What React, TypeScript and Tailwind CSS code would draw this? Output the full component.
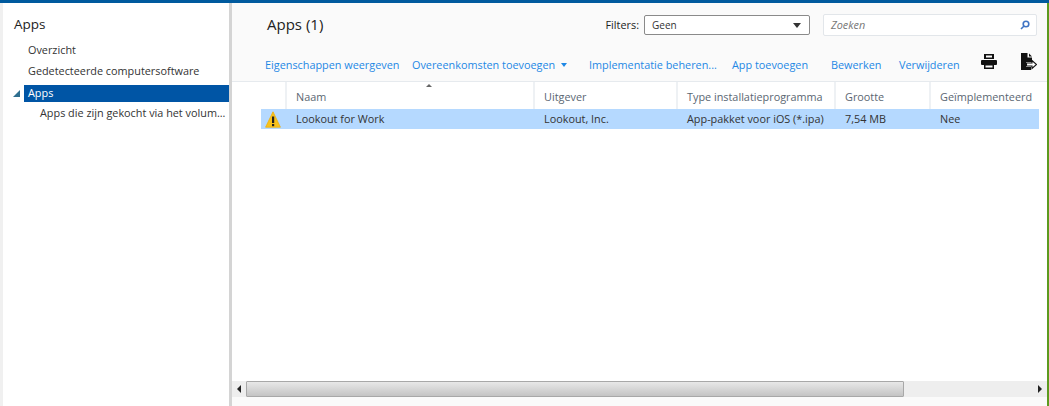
const actions = [
  { label: "Eigenschappen weergeven", w: "w-[147px]" },
  { label: "Overeenkomsten toevoegen", w: "w-[177px]", caret: true },
  { label: "Implementatie beheren...", w: "w-[143px]" },
  { label: "App toevoegen", w: "w-[99px]" },
  { label: "Bewerken", w: "w-[68px]" },
  { label: "Verwijderen", w: "w-[60px]" },
];

const columns = [
  { label: "Naam", value: "Lookout for Work", w: "w-[248px]" },
  { label: "Uitgever", value: "Lookout, Inc.", w: "w-[143px]" },
  { label: "Type installatieprogramma", value: "App-pakket voor iOS (*.ipa)", w: "w-[158px]" },
  { label: "Grootte", value: "7,54 MB", w: "w-[95px]" },
  { label: "Geïmplementeerd", value: "Nee", w: "w-[109px]" },
];

function Warning() {
  return (
    <svg width="16" height="17" viewBox="0 0 16 17">
      <path d="M8 0.8 L15.4 16.2 L0.6 16.2 Z" fill="#f8c21c" stroke="#eeb00c" strokeWidth="0.8" strokeLinejoin="round" />
      <rect x="7" y="5.5" width="2.2" height="6.5" fill="#222" />
      <rect x="7" y="13" width="2.2" height="2.2" fill="#222" />
    </svg>
  );
}

function Printer() {
  return (
    <svg width="16" height="15" viewBox="0 0 16 15" fill="#111">
      <path d="M3 0h10v5H3z M5 1.5v2h6v-2z" fillRule="evenodd" />
      <rect x="0" y="6" width="16" height="5" rx="1" />
      <path d="M3 10h10v5H3z M4.5 11.5v2h7v-2z" fillRule="evenodd" />
    </svg>
  );
}

function ExportDoc() {
  return (
    <svg width="16" height="17" viewBox="0 0 16 17">
      <path d="M0 0h6.5v4.5H11V9H5v5h5v3H0z" fill="#111" />
      <path d="M8 0.5l3 3H8z" fill="#111" />
      <path d="M5.5 10h5.5V7.5l4.5 4-4.5 4V13H5.5z" fill="#fff" stroke="#111" strokeWidth="1.1" />
    </svg>
  );
}

export default function App() {
  return (
    <div className="flex h-[406px] w-[1049px] flex-col overflow-hidden bg-white font-['Open_Sans',sans-serif] text-[10.85px] text-[#333]">
      <div className="h-[3px] bg-[#005a9e]" />
      <div className="flex min-h-0 flex-1">
        {/* Sidebar */}
        <aside className="w-[232px] shrink-0 border-r-[3px] border-l-[3px] border-r-[#d4d4d4] border-l-[#f0f0f0] bg-white">
          <div className="pt-[11px] pl-[11px] text-[13.5px] leading-[20px] text-[#222]">Apps</div>
          <ul className="mt-[6px]">
            <li className="flex h-[21px] items-center pl-[25px]">Overzicht</li>
            <li className="flex h-[21px] items-center pl-[25px]">Gedetecteerde computersoftware</li>
            <li className="relative mt-[3px] ml-[21px] flex h-[17px] items-center bg-[#0055a5] pl-[4px] text-white">
              <span className="absolute top-[5px] -left-[11px] h-0 w-0 border-b-[7px] border-l-[7px] border-b-[#2f6f8f] border-l-transparent" />
              Apps
            </li>
            <li className="flex h-[22px] items-center pl-[37px] whitespace-nowrap">Apps die zijn gekocht via het volum...</li>
          </ul>
        </aside>

        {/* Main */}
        <main className="flex min-w-0 flex-1 flex-col border-r-2 border-r-[#5c9a1e]">
          <div className="h-[79px] shrink-0 border-b border-b-[#e6eaee] bg-[#fafafa]">
            <div className="flex h-[44px] items-center pr-[10px] pl-[35px]">
              <h1 className="-mt-[2px] text-[15px] font-normal text-[#222]">Apps (1)</h1>
              <span className="mr-[5px] ml-auto text-[#222]">Filters:</span>
              <div className="flex h-[20px] w-[166px] items-center justify-between rounded-[2px] border border-[#8a8a8a] bg-white pr-[8px] pl-[7px] text-[10px]">
                Geen
                <span className="h-0 w-0 border-x-[4px] border-t-[5px] border-x-transparent border-t-[#333]" />
              </div>
              <div className="ml-[13px] flex h-[22px] w-[214px] items-center justify-between rounded-[2px] border border-[#e2e6ea] bg-white pr-[6px] pl-[7px] text-[#777] italic">
                <span className="mt-[1px]">Zoeken</span>
                <svg width="10" height="10" viewBox="0 0 10 10" fill="none" stroke="#3f74c4" strokeWidth="1.6">
                  <circle cx="6" cy="4" r="2.8" />
                  <path d="M3.8 6.2L1 9" />
                </svg>
              </div>
            </div>
            <div className="flex h-[34px] items-center pt-[2px] pl-[33px] text-[#1e88e5]">
              {actions.map((a) => (
                <span key={a.label} className={`flex shrink-0 items-center whitespace-nowrap ${a.w}`}>
                  {a.label}
                  {a.caret && <span className="ml-[6px] h-0 w-0 border-x-[3.5px] border-t-[4px] border-x-transparent border-t-[#1e88e5]" />}
                </span>
              ))}
              <span className="-mt-[7px] ml-[22px] flex items-center gap-[24px]">
                <Printer />
                <ExportDoc />
              </span>
            </div>
          </div>

          {/* Table */}
          <div className="min-h-0 flex-1 bg-white pl-[29px]">
            <div className="flex h-[27px] text-[#5a6672]">
              <div className="w-[26px] shrink-0 border-r-2 border-r-[#eef1f4]" />
              {columns.map((c, i) => (
                <div key={c.label} className={`relative flex shrink-0 items-end whitespace-nowrap border-r-2 border-r-[#eef1f4] pb-[4px] pl-[9px] last:border-r-0 ${c.w}`}>
                  {i === 0 && <span className="absolute top-[2px] left-[139px] h-0 w-0 border-x-[3.5px] border-b-[3px] border-x-transparent border-b-[#666]" />}
                  {c.label}
                </div>
              ))}
            </div>
            <div className="flex h-[20px] w-[778px] items-center bg-[#b5d9ff] text-[#333]">
              <div className="flex w-[26px] shrink-0 justify-center pr-[3px]"><Warning /></div>
              {columns.map((c) => (
                <div key={c.label} className={`mt-[1px] shrink-0 whitespace-nowrap pl-[9px] ${c.w}`}>{c.value}</div>
              ))}
            </div>
          </div>

          {/* Horizontal scrollbar */}
          <div className="flex h-[16px] shrink-0 items-center bg-[#eeeeee]">
            <div className="flex w-[14px] shrink-0 justify-center">
              <span className="h-0 w-0 border-y-[4px] border-r-[4px] border-y-transparent border-r-[#222]" />
            </div>
            <div className="h-full w-[658px] rounded-[1px] border border-[#a8a8a8] bg-gradient-to-b from-[#e8e8e8] to-[#c4c4c4]" />
            <div className="ml-auto flex w-[14px] shrink-0 justify-center">
              <span className="h-0 w-0 border-y-[4px] border-l-[4px] border-y-transparent border-l-[#222]" />
            </div>
          </div>
          <div className="h-[9px] shrink-0 bg-[#fafafa]" />
        </main>
      </div>
    </div>
  );
}
